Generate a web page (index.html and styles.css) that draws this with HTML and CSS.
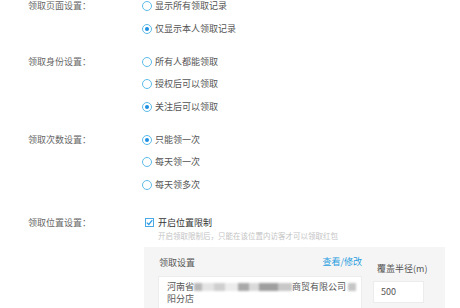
FILE: index.html
```html
<!DOCTYPE html>
<html lang="zh-CN">
<head>
  <meta charset="UTF-8">
  <title>领取设置</title>
  <link rel="stylesheet" href="styles.css">
</head>
<body>
  <div class="form">
    <div class="form-row">
      <div class="form-label">领取页面设置：</div>
      <div class="form-options">
        <label class="radio"><span class="radio-dot"></span>显示所有领取记录</label>
        <label class="radio is-checked"><span class="radio-dot"></span>仅显示本人领取记录</label>
      </div>
    </div>

    <div class="form-row">
      <div class="form-label">领取身份设置：</div>
      <div class="form-options">
        <label class="radio"><span class="radio-dot"></span>所有人都能领取</label>
        <label class="radio"><span class="radio-dot"></span>授权后可以领取</label>
        <label class="radio is-checked"><span class="radio-dot"></span>关注后可以领取</label>
      </div>
    </div>

    <div class="form-row">
      <div class="form-label">领取次数设置：</div>
      <div class="form-options">
        <label class="radio is-checked"><span class="radio-dot"></span>只能领一次</label>
        <label class="radio"><span class="radio-dot"></span>每天领一次</label>
        <label class="radio"><span class="radio-dot"></span>每天领多次</label>
      </div>
    </div>

    <div class="form-row row-location">
      <div class="form-label">领取位置设置：</div>
      <div class="form-control">
        <label class="checkbox">
          <span class="checkbox-box">
            <svg width="7" height="7" viewBox="0 0 7 7"><path d="M0.8 3.6 L2.8 5.5 L6.3 1.2" fill="none" stroke="#2a9be6" stroke-width="1.2"/></svg>
          </span>开启位置限制
        </label>
        <p class="hint">开启领取限制后，只能在该位置内访客才可以领取红包</p>

        <div class="location-panel">
          <div class="panel-main">
            <div class="panel-head">
              <span>领取设置</span>
              <a class="panel-link">查看/修改</a>
            </div>
            <div class="address">
              <div class="address-line">河南省<span class="blur blur-long"></span>商贸有限公司<span class="blur blur-short"></span></div>
              <div class="address-line">阳分店</div>
            </div>
          </div>
          <div class="panel-side">
            <div class="side-label">覆盖半径(m)</div>
            <div class="radius-input">500</div>
          </div>
        </div>
      </div>
    </div>
  </div>
</body>
</html>
```

FILE: styles.css
```css
/* General styles */
body {
  margin: 0;
  background-color: #fff;
  font-family: "Noto Sans CJK SC", "Noto Sans", sans-serif;
  font-size: 9px;
  color: #555;
  overflow: hidden;
}

.form {
  display: flex;
  flex-direction: column;
  gap: 21px;
}

.form-row {
  display: flex;
  align-items: flex-start;
}

.row-location {
  margin-top: 5px;
}

.form-label {
  width: 142px;
  padding-left: 28px;
  box-sizing: border-box;
  line-height: 12px;
  color: #666;
  flex-shrink: 0;
}

.form-options {
  display: flex;
  flex-direction: column;
  gap: 10.5px;
}

/* Radio */
.radio {
  display: flex;
  align-items: center;
  height: 12px;
  line-height: 12px;
  color: #555;
}

.radio-dot {
  width: 10px;
  height: 10px;
  box-sizing: border-box;
  border: 1px solid #5cbbe8;
  border-radius: 50%;
  margin-right: 3px;
  display: flex;
  align-items: center;
  justify-content: center;
}

.is-checked .radio-dot::after {
  content: "";
  width: 4px;
  height: 4px;
  border-radius: 50%;
  background-color: #1a8fe3;
}

/* Checkbox */
.checkbox {
  display: flex;
  align-items: center;
  height: 12px;
  line-height: 12px;
  margin-left: 3px;
  color: #333;
}

.checkbox-box {
  width: 9px;
  height: 9px;
  box-sizing: border-box;
  border: 1px solid #4aa8e6;
  margin-right: 4px;
  display: flex;
  align-items: center;
  justify-content: center;
}

.hint {
  margin: 2px 0 0 16px;
  font-size: 7.5px;
  line-height: 10px;
  color: #c4c4c4;
}

/* Location panel */
.location-panel {
  display: flex;
  gap: 11px;
  width: 301px;
  height: 80px;
  margin: 6px 0 0 2px;
  padding: 10px 0 0 14px;
  box-sizing: border-box;
  background-color: #f5f5f5;
}

.panel-main {
  width: 204px;
}

.panel-head {
  display: flex;
  justify-content: space-between;
  align-items: center;
  line-height: 12px;
  padding-left: 1px;
  margin-bottom: 7px;
  color: #555;
}

.panel-link {
  color: #2b9ee0;
  margin-top: -2px;
}

.address {
  background-color: #fff;
  border: 1px solid #ececec;
  padding: 4px 2px 4px 8px;
  color: #555;
}

.address-line {
  display: flex;
  align-items: center;
  height: 12px;
  white-space: nowrap;
}

.blur {
  height: 8px;
  flex-shrink: 0;
  filter: blur(1px);
}

.blur-long {
  width: 98px;
  background: linear-gradient(90deg,
    #b8b8b8 0 8%, #e4e4e4 8% 20%, #cfcfcf 20% 32%, #ececec 32% 45%,
    #a9a9a9 45% 56%, #dadada 56% 66%, #9f9f9f 66% 86%, #c8c8c8 86% 100%);
}

.blur-short {
  width: 8px;
  margin-left: 2px;
  background-color: #c6c6c6;
}

.panel-side {
  width: 55px;
}

.side-label {
  margin: 6px 0 6px 4px;
  line-height: 12px;
  white-space: nowrap;
  color: #555;
}

.radius-input {
  width: 51px;
  height: 22px;
  box-sizing: border-box;
  background-color: #fff;
  border: 1px solid #ececec;
  padding-left: 7px;
  line-height: 20px;
  color: #555;
}
```
